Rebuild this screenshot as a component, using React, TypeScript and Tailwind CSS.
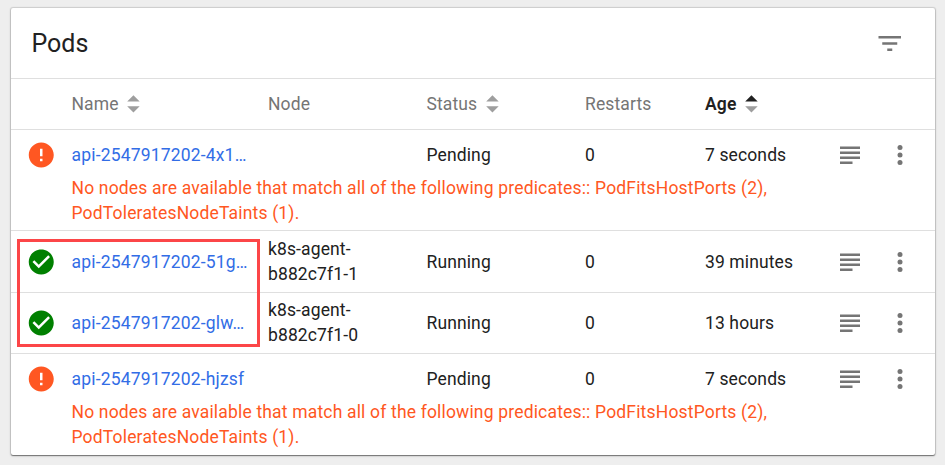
type Pod = {
  name: string;
  node?: string[];
  status: string;
  restarts: number;
  age: string;
  message?: string[];
  layout: string;
};

const failure = [
  'No nodes are available that match all of the following predicates:: PodFitsHostPorts (2),',
  'PodToleratesNodeTaints (1).',
];

const pods: Pod[] = [
  { name: 'api-2547917202-4x1…', status: 'Pending', restarts: 0, age: '7 seconds', message: failure, layout: 'h-[101px] border-b pt-[13px]' },
  { name: 'api-2547917202-51g…', node: ['k8s-agent-', 'b882c7f1-1'], status: 'Running', restarts: 0, age: '39 minutes', layout: 'h-[62px] border-b pt-[6px]' },
  { name: 'api-2547917202-glw…', node: ['k8s-agent-', 'b882c7f1-0'], status: 'Running', restarts: 0, age: '13 hours', layout: 'h-[61px] border-b pt-[5px]' },
  { name: 'api-2547917202-hjzsf', status: 'Pending', restarts: 0, age: '7 seconds', message: failure, layout: 'h-[101px] pt-[13px]' },
];

const columns = 'grid grid-cols-[60.5px_196.5px_158.5px_158.5px_120px_134px_58px_37px] items-center';

function Sort({ active = false }: { active?: boolean }) {
  return (
    <svg className="ml-[8.5px] h-[18px] w-[13px]" viewBox="0 0 13 18">
      <path d="M0.2 6.5 6.45 0.2l6.25 6.3z" fill={active ? '#212121' : '#9e9e9e'} />
      <path d="M0.2 11.2h12.5L6.45 17.5z" fill="#9e9e9e" />
    </svg>
  );
}

function StatusIcon({ ok }: { ok: boolean }) {
  return (
    <svg className={`ml-[15px] size-[30px] ${ok ? '' : '-mt-[4px] -mb-[3px]'}`} viewBox="-0.2 0 24 24" fill={ok ? '#008000' : '#ff5722'}>
      {ok ? (
        <path d="M12 2C6.48 2 2 6.48 2 12s4.48 10 10 10 10-4.48 10-10S17.52 2 12 2zm-2 15l-5-5 1.41-1.41L10 14.17l7.59-7.59L19 8l-9 9z" />
      ) : (
        <path d="M12 2C6.48 2 2 6.48 2 12s4.48 10 10 10 10-4.48 10-10S17.52 2 12 2zm1 15h-2v-2h2v2zm0-4h-2V7h2v6z" />
      )}
    </svg>
  );
}

function LogsIcon() {
  return (
    <svg className="h-[19px] w-5" viewBox="0 0 20 19" fill="#757575">
      <path d="M0 0.4h20v2.6H0zM0 5.4h20v2.6H0zM0 10.4h20v2.6H0zM0 15.4h12.5v2.6H0z" />
    </svg>
  );
}

function MenuIcon({ raised }: { raised: boolean }) {
  return (
    <svg className={`h-5 w-[6px] ${raised ? 'mb-px' : ''}`} viewBox="0 0 6 20" fill="#757575">
      <circle cx="3" cy="2.5" r="2.5" />
      <circle cx="3" cy="10" r="2.5" />
      <circle cx="3" cy="17.5" r="2.5" />
    </svg>
  );
}

function PodRow({ pod }: { pod: Pod }) {
  return (
    <div className={`border-[#dfdfdf] ${pod.layout}`}>
      <div className={`${columns} ${pod.node ? 'h-[50px]' : 'h-[25px] grid-rows-[25px]'}`}>
        <StatusIcon ok={!pod.message} />
        <a className="tracking-[0.175px] text-[#326de6]">{pod.name}</a>
        <div>{pod.node?.map((line) => <div key={line}>{line}</div>)}</div>
        <div>{pod.status}</div>
        <div>{pod.restarts}</div>
        <div>{pod.age}</div>
        <div className="pl-[0.5px]"><LogsIcon /></div>
        <MenuIcon raised={!!pod.message} />
      </div>
      {pod.message && (
        <div className="mt-2 pl-[60.5px] tracking-[0.175px] text-[#ff5722]">
          {pod.message.map((line) => <div key={line}>{line}</div>)}
        </div>
      )}
    </div>
  );
}

export default function App() {
  return (
    <div className="relative h-[465px] w-[945px] overflow-hidden bg-[#eeeeee] pt-2 pl-[11px] font-[Roboto,sans-serif] text-[17.5px] leading-[25px] tracking-[0.12px] text-[#212121]">
      <div className="h-[447px] w-[924px] rounded-[2px] bg-white shadow-[0_0_1px_1px_rgba(0,0,0,0.13),0_1px_1px_rgba(0,0,0,0.4),0_1px_3px_rgba(0,0,0,0.12)]">
        <div className="flex h-[71px] items-center justify-between border-b border-[#dfdfdf] pr-[34px] pl-5">
          <h1 className="pl-[0.5px] text-[25px] tracking-normal">Pods</h1>
          <svg className="h-[15px] w-[23px]" viewBox="-0.5 0.4 23 15" fill="#757575">
            <path d="M0 0.4h22.5v2.5H0zM3.75 6.65h15v2.5h-15zM8.75 12.9h5v2.5h-5z" />
          </svg>
        </div>
        <div className={`${columns} h-[51px] border-b border-[#dfdfdf] text-[#757575]`}>
          <div />
          <div className="flex items-center">Name<Sort /></div>
          <div>Node</div>
          <div className="flex items-center">Status<Sort /></div>
          <div>Restarts</div>
          <div className="flex items-center font-semibold text-[#212121]">Age<Sort active /></div>
        </div>
        {pods.map((pod) => <PodRow key={pod.name} pod={pod} />)}
      </div>
      <div className="absolute top-[239px] left-[17px] h-[108px] w-[243px] border-3 border-[#fc4648]" />
    </div>
  );
}
